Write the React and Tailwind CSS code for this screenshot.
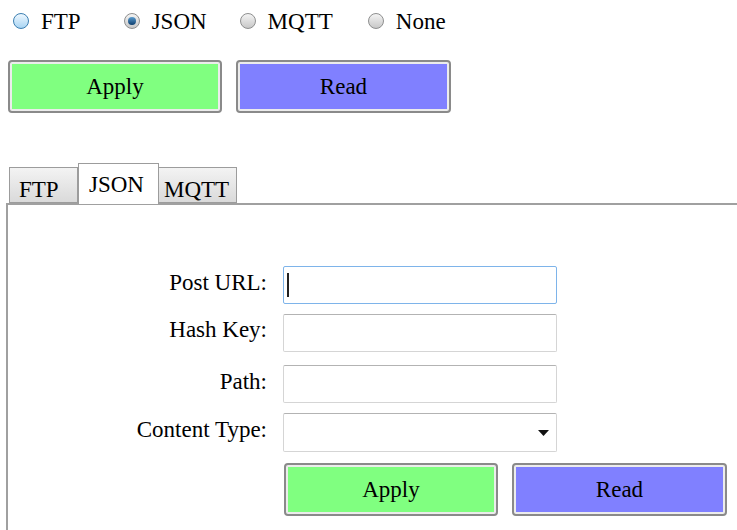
import React, { useState } from "react";

const Radio = ({ label, checked, hover, onClick }) => {
    let circle = "bg-gradient-to-b from-[#f4f4f4] to-[#c8c8c8] border-[#8e8f8f]";
    if (hover) circle = "bg-gradient-to-b from-[#eef8ff] to-[#a9d5f3] border-[#3c7fb1]";
    return (
        <label className="flex items-center cursor-pointer" onClick={onClick}>
            <span className={`w-[16px] h-[16px] rounded-full border flex items-center justify-center ${circle}`}>
                {checked && <span className="w-[8px] h-[8px] rounded-full bg-gradient-to-b from-[#5a9dd0] to-[#0d3f6e]"></span>}
            </span>
            <span className="ml-[12px]">{label}</span>
        </label>
    );
};

const ColorButton = ({ children, color, className }) => (
    <button className={`h-[53px] border-2 border-[#8a8a8a] rounded-[4px] p-[2px] bg-[#ececec] ${className}`}>
        <div className={`h-full w-full flex items-center justify-center ${color}`}>{children}</div>
    </button>
);

const App = () => {
    const [mode, setMode] = useState("JSON");
    const [tab, setTab] = useState("JSON");

    return (
        <div className="w-[737px] h-[530px] overflow-hidden bg-white text-black text-[23px] leading-none font-['Liberation_Serif','Times_New_Roman',serif]">
            {/* protocol radios */}
            <div className="flex items-center h-[42px] pl-[13px]">
                <Radio label="FTP" hover checked={mode === "FTP"} onClick={() => setMode("FTP")} />
                <div className="ml-[43px]"><Radio label="JSON" checked={mode === "JSON"} onClick={() => setMode("JSON")} /></div>
                <div className="ml-[33px]"><Radio label="MQTT" checked={mode === "MQTT"} onClick={() => setMode("MQTT")} /></div>
                <div className="ml-[35px]"><Radio label="None" checked={mode === "None"} onClick={() => setMode("None")} /></div>
            </div>

            <div className="flex gap-[14px] pl-[8px] mt-[18px]">
                <ColorButton color="bg-[#80ff80]" className="w-[214px]">Apply</ColorButton>
                <ColorButton color="bg-[#8080ff]" className="w-[215px]">Read</ColorButton>
            </div>

            {/* tabs */}
            <div className="flex items-end pl-[9px] mt-[50px] h-[40px]">
                {["FTP", "JSON", "MQTT"].map((t) =>
                    t === tab ? (
                        <div key={t} className="h-[41px] w-[81px] pl-[10px] border border-b-0 border-[#9c9c9c] bg-white relative z-10 -mb-[1px] pt-[9px]">{t}</div>
                    ) : (
                        <div key={t} onClick={() => setTab(t)} className={`h-[36px] border border-[#9c9c9c] bg-gradient-to-b from-[#f3f3f3] to-[#dadada] pt-[10px] cursor-pointer ${t === "FTP" ? "w-[69px] pl-[9px]" : "w-[78px] pl-[5px] border-l-0"}`}>{t}</div>
                    )
                )}
            </div>

            {/* tab content */}
            <div className="ml-[6px] h-[330px] border-l-2 border-t-2 border-[#a0a0a0]">
                <div className="pt-[61px]">
                    <div className="grid grid-cols-[259px_274px] gap-x-[16px] items-center">
                        <div className="text-right -mt-[6px]">Post URL:</div>
                        <div className="h-[38px] border border-[#7eb4ea] rounded-[2px] flex items-center pl-[3px]">
                            <span className="w-[2px] h-[24px] bg-[#222]"></span>
                        </div>

                        <div className="text-right mt-[3px]">Hash Key:</div>
                        <div className="h-[38px] mt-[10px] border border-[#d5d5d5] border-t-[#b3b3b3] rounded-[2px]"></div>

                        <div className="text-right mt-[7px]">Path:</div>
                        <div className="h-[38px] mt-[13px] border border-[#d5d5d5] border-t-[#b3b3b3] rounded-[2px]"></div>

                        <div className="text-right mt-[3px]">Content Type:</div>
                        <div className="h-[39px] mt-[10px] border border-[#d5d5d5] border-t-[#b3b3b3] rounded-[2px] flex items-center justify-end pr-[7px]">
                            <svg width="11" height="6" viewBox="0 0 11 6"><path d="M0 0h11L5.5 6z" fill="#111" /></svg>
                        </div>
                    </div>
                    <div className="flex gap-[14px] pl-[276px] mt-[11px]">
                        <ColorButton color="bg-[#80ff80]" className="w-[214px]">Apply</ColorButton>
                        <ColorButton color="bg-[#8080ff]" className="w-[215px]">Read</ColorButton>
                    </div>
                </div>
            </div>
        </div>
    );
};

export default App;
